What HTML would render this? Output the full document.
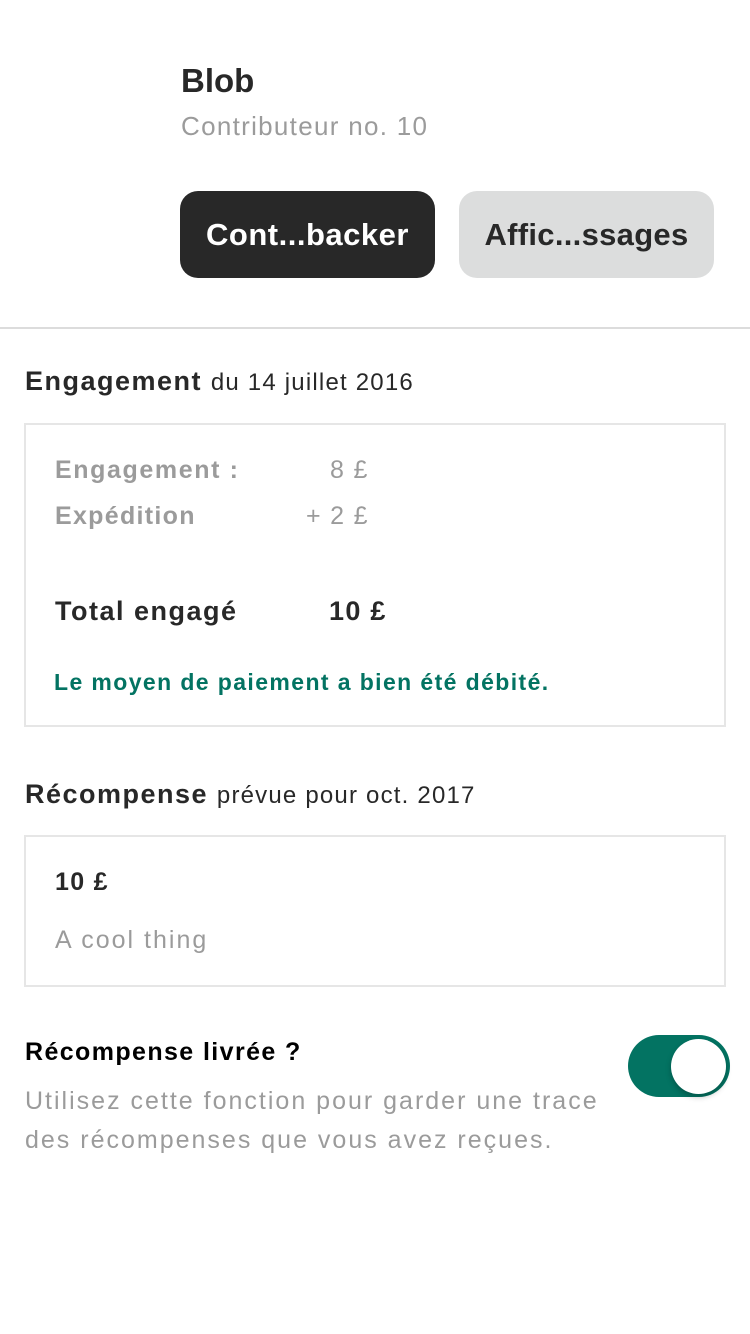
<!DOCTYPE html>
<html><head><meta charset="utf-8"><style>
body{margin:0;width:750px;height:1334px;background:#fff;font-family:"Liberation Sans",sans-serif;position:relative;overflow:hidden;color:#282828}
.a{position:absolute;white-space:nowrap;letter-spacing:1.3px}
.box{position:absolute;left:24px;width:702px;border:2px solid #e6e6e6;box-sizing:border-box}
</style></head><body>
<div class="a" style="left:181px;top:62px;font-size:33px;font-weight:bold;letter-spacing:0">Blob</div>
<div class="a" style="left:181px;top:111px;font-size:26px;color:#9b9b9b;letter-spacing:1.3px">Contributeur no. 10</div>
<div class="a" style="left:180px;top:191px;width:255px;height:87px;background:#282828;border-radius:18px;color:#fff;font-size:31px;font-weight:bold;line-height:87px;text-align:center;letter-spacing:0.5px">Cont...backer</div>
<div class="a" style="left:459px;top:191px;width:255px;height:87px;background:#dcdddd;border-radius:18px;color:#282828;font-size:31px;font-weight:bold;line-height:87px;text-align:center;letter-spacing:0.3px">Affic...ssages</div>
<div class="a" style="left:0;top:327px;width:750px;height:2px;background:#dcdcdc"></div>
<div class="a" style="left:25px;top:366px;font-size:27px"><b style="letter-spacing:1.5px">Engagement</b> <span style="font-size:24px;letter-spacing:1.2px">du 14 juillet 2016</span></div>
<div class="box" style="top:423px;height:304px"></div>
<div class="a" style="left:55px;top:456px;font-size:25px;color:#9b9b9b;font-weight:bold;letter-spacing:1.6px">Engagement :</div>
<div class="a" style="left:330px;top:456px;font-size:25px;color:#9b9b9b">8 £</div>
<div class="a" style="left:55px;top:502px;font-size:25px;color:#9b9b9b;font-weight:bold">Expédition</div>
<div class="a" style="left:306px;top:502px;font-size:25px;color:#9b9b9b">+ 2 £</div>
<div class="a" style="left:55px;top:596px;font-size:27px;font-weight:bold;letter-spacing:1.5px">Total engagé</div>
<div class="a" style="left:329px;top:596px;font-size:27px;font-weight:bold">10 £</div>
<div class="a" style="left:54px;top:669px;font-size:23px;color:#037362;font-weight:bold;letter-spacing:1.4px">Le moyen de paiement a bien été débité.</div>
<div class="a" style="left:25px;top:779px;font-size:27px"><b style="letter-spacing:1.5px">Récompense</b> <span style="font-size:24px;letter-spacing:1.2px">prévue pour oct. 2017</span></div>
<div class="box" style="top:835px;height:152px"></div>
<div class="a" style="left:55px;top:868px;font-size:25px;font-weight:bold">10 £</div>
<div class="a" style="left:55px;top:926px;font-size:25px;color:#9b9b9b;letter-spacing:2px">A cool thing</div>
<div class="a" style="left:25px;top:1038px;font-size:25px;font-weight:bold;color:#000;letter-spacing:1.4px">Récompense livrée ?</div>
<div class="a" style="left:25px;top:1082px;font-size:25px;color:#9b9b9b;line-height:39px;letter-spacing:2px">Utilisez cette fonction pour garder une trace<br>des récompenses que vous avez reçues.</div>
<div class="a" style="left:628px;top:1035px;width:102px;height:62px;border-radius:31px;background:#037362"></div>
<div class="a" style="left:671px;top:1039px;width:55px;height:55px;border-radius:50%;background:#fff;box-shadow:0 3px 6px rgba(0,0,0,.25)"></div>
</body></html>
